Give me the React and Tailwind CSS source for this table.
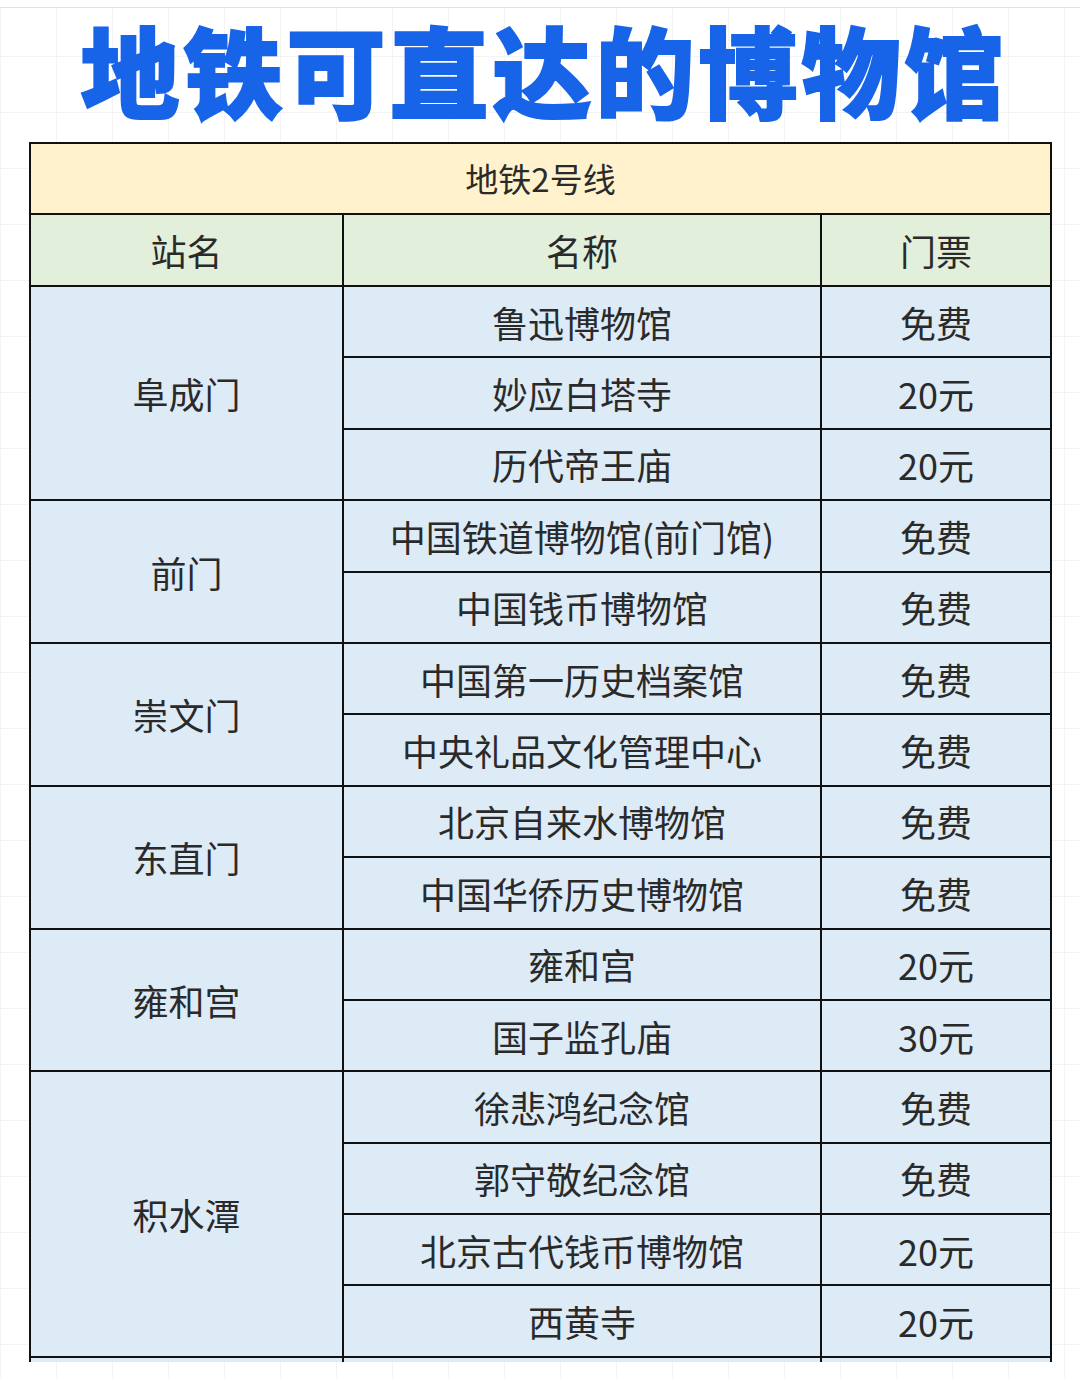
import React from "react"

const groups = [
  { station: "阜成门", items: [["鲁迅博物馆", "免费"], ["妙应白塔寺", "20元"], ["历代帝王庙", "20元"]] },
  { station: "前门", items: [["中国铁道博物馆(前门馆)", "免费"], ["中国钱币博物馆", "免费"]] },
  { station: "崇文门", items: [["中国第一历史档案馆", "免费"], ["中央礼品文化管理中心", "免费"]] },
  { station: "东直门", items: [["北京自来水博物馆", "免费"], ["中国华侨历史博物馆", "免费"]] },
  { station: "雍和宫", items: [["雍和宫", "20元"], ["国子监孔庙", "30元"]] },
  { station: "积水潭", items: [["徐悲鸿纪念馆", "免费"], ["郭守敬纪念馆", "免费"], ["北京古代钱币博物馆", "20元"], ["西黄寺", "20元"]] },
  { station: "", items: [["", ""]] },
]

const font = { fontFamily: '"Noto Sans CJK SC", "Noto Sans", sans-serif' }

export default function App() {
  return (
    <div
      className="w-[1080px] h-[1378px] bg-white bg-[linear-gradient(to_right,#f3f3f3_1px,transparent_1px),linear-gradient(to_bottom,#f3f3f3_1px,transparent_1px)] bg-[size:56px_56px] overflow-hidden"
      style={font}
    >
      <div className="h-[8px] bg-white border-b border-[#e2e2e2]" />
      <div className="h-[134px] pt-[2px]">
        <h1 className="w-full text-center text-[99px] leading-[116px] font-black tracking-[4px] text-[#1864e8] [-webkit-text-stroke:2px_#1864e8] pl-[8px] whitespace-nowrap">
          地铁可直达的博物馆
        </h1>
      </div>

      <div className="ml-[29px] w-[1023px] h-[1220px] overflow-hidden">
        <div className="grid grid-cols-[311px_476px_228px] gap-[2px] bg-[#111] p-[2px] text-[#2a2a2a]">
          <div className="col-span-3 h-[69px] bg-[#fff2cc] flex items-center justify-center text-[33px]">
            地铁2号线
          </div>
          <div className="h-[70px] bg-[#e2efda] flex items-center justify-center text-[36px]">站名</div>
          <div className="h-[70px] bg-[#e2efda] flex items-center justify-center text-[36px]">名称</div>
          <div className="h-[70px] bg-[#e2efda] flex items-center justify-center text-[36px]">门票</div>
          {groups.map((g, gi) => (
            <React.Fragment key={gi}>
              <div
                className="bg-[#ddebf7] flex items-center justify-center text-[36px]"
                style={{ gridRow: `span ${g.items.length}` }}
              >
                {g.station}
              </div>
              {g.items.map(([name, price], i) => (
                <React.Fragment key={i}>
                  <div className="h-[69.4px] bg-[#ddebf7] flex items-center justify-center text-[36px] whitespace-nowrap">
                    {name}
                  </div>
                  <div className="h-[69.4px] bg-[#ddebf7] flex items-center justify-center text-[36px]">
                    {price}
                  </div>
                </React.Fragment>
              ))}
            </React.Fragment>
          ))}
        </div>
      </div>
    </div>
  )
}
